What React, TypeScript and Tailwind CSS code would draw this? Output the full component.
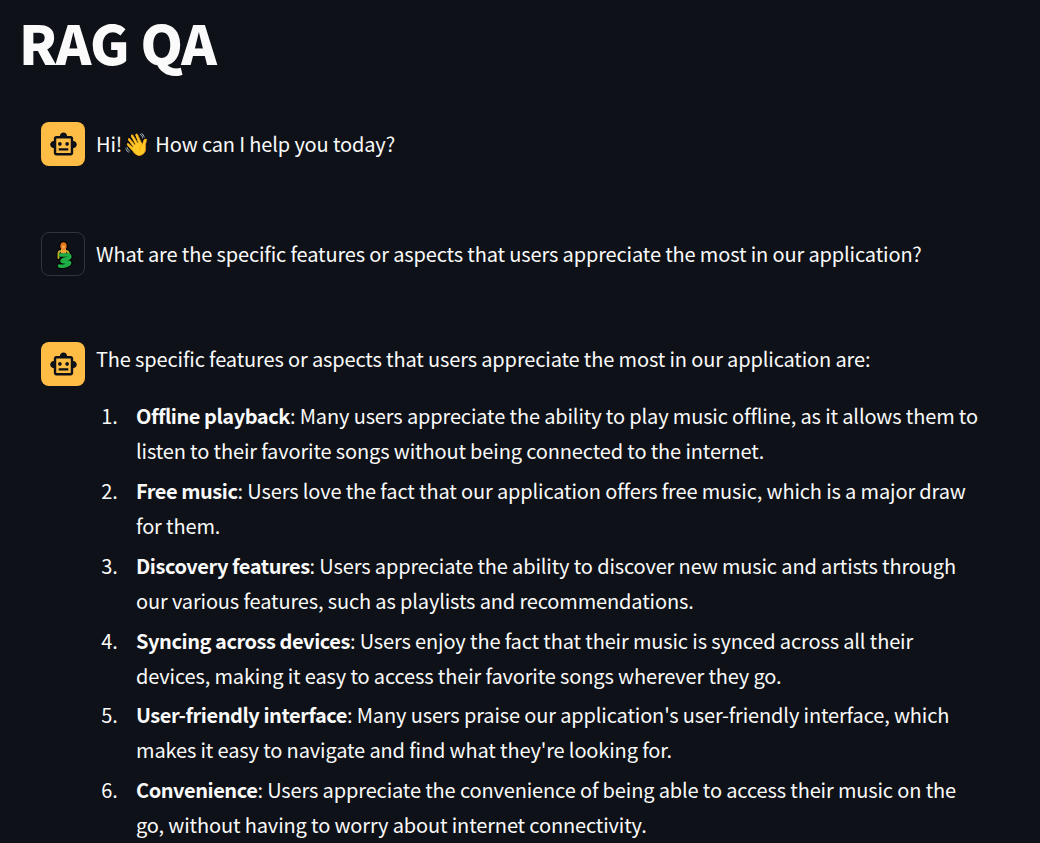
import React from "react";

const Bot = () => (
  <div className="flex h-[44px] w-[44px] shrink-0 items-center justify-center rounded-[8px] bg-[#ffbd45]">
    <svg width="29" height="29" viewBox="0 0 24 24" fill="#0e1117">
      <path d="M20 9V7c0-1.1-.9-2-2-2h-3c0-1.66-1.34-3-3-3S9 3.34 9 5H6c-1.1 0-2 .9-2 2v2c-1.66 0-3 1.34-3 3s1.34 3 3 3v4c0 1.1.9 2 2 2h12c1.1 0 2-.9 2-2v-4c1.66 0 3-1.34 3-3s-1.34-3-3-3zm-2 10H6V7h12v12zm-9-6c-.83 0-1.5-.67-1.5-1.5S8.17 10 9 10s1.5.67 1.5 1.5S9.83 13 9 13zm7.5-1.5c0 .83-.67 1.5-1.5 1.5s-1.5-.67-1.5-1.5.67-1.5 1.5-1.5 1.5.67 1.5 1.5zM8 15h8v2H8v-2z" />
    </svg>
  </div>
);

const Merperson = () => (
  <svg width="26" height="30" viewBox="0 0 26 30" fill="none" strokeLinecap="round" strokeLinejoin="round">
    <path d="M8.5 19V14.5c0-1.5 1-2.5 2.5-2.5h5c1.5 0 2.5 1 2.5 2.5V16" stroke="#000" strokeWidth="4" />
    <path d="M10 16h9c1.5 1.5 1 3-1 3.5-3 .5-6 .5-6 2.5s6.500 0 7.500 1.500-4 4.500-10 3.500" stroke="#000" strokeWidth="5.500" />
    <ellipse cx="13.500" cy="7" rx="4.500" ry="5" fill="#000" />
    <path d="M8.500 19V14.500c0-1.500 1-2.500 2.500-2.500h5c1.500 0 2.500 1 2.500 2.500V16" stroke="#b9ad2c" strokeWidth="2" />
    <rect x="11" y="9.500" width="5" height="5" fill="#f2a33a" />
    <ellipse cx="13.500" cy="7" rx="3.200" ry="3.800" fill="#e2741c" />
    <rect x="12" y="6.500" width="3" height="3" fill="#f4a64a" />
    <path d="M10.500 16h8.500c1.500 1.500 1 3-1 3.500-3 .5-6 .5-6 2.500s6.500 0 7.500 1.500-4 4.500-10 3.500" stroke="#1fae46" strokeWidth="3.500" />
  </svg>
);

const items: [string, string][] = [
  ["Offline playback", ": Many users appreciate the ability to play music offline, as it allows them to listen to their favorite songs without being connected to the internet."],
  ["Free music", ": Users love the fact that our application offers free music, which is a major draw for them."],
  ["Discovery features", ": Users appreciate the ability to discover new music and artists through our various features, such as playlists and recommendations."],
  ["Syncing across devices", ": Users enjoy the fact that their music is synced across all their devices, making it easy to access their favorite songs wherever they go."],
  ["User-friendly interface", ": Many users praise our application's user-friendly interface, which makes it easy to navigate and find what they're looking for."],
  ["Convenience", ": Users appreciate the convenience of being able to access their music on the go, without having to worry about internet connectivity."],
];

export default function App() {
  return (
    <div className="h-[843px] overflow-hidden bg-[#0e1117] pl-[21px] text-[20px] leading-[35px] tracking-[-0.14px] text-[#fafafa] [font-family:'Noto_Sans_CJK_SC','Noto_Sans',sans-serif]">
      <h1 className="-ml-[2px] pt-[9px] text-[54px] font-black leading-[66px] tracking-[-0.8px]">RAG QA</h1>
      <div className="mt-[47px] flex gap-[11px] pl-[20px]">
        <Bot />
        <p className="pt-[3px]">Hi!<span className="mx-[1px] text-[22px]">👋</span> How can I help you today?</p>
      </div>
      <div className="mt-[66px] flex gap-[11px] pl-[20px]">
        <div className="flex h-[44px] w-[44px] shrink-0 items-center justify-center rounded-[8px] border border-[#31333f]"><Merperson /></div>
        <p className="pt-[4px]">What are the specific features or aspects that users appreciate the most in our application?</p>
      </div>
      <div className="mt-[66px] flex gap-[11px] pl-[20px]">
        <Bot />
        <div className="-mt-[1px] w-[888px]">
          <p>The specific features or aspects that users appreciate the most in our application are:</p>
          <ol className="mt-[22px] list-decimal pl-[26px]">
            {items.map(([b, t]) => (
              <li key={b} className="mb-[4.85px] pl-[14px]"><b className="font-semibold tracking-[-0.45px]">{b}</b>{t}</li>
            ))}
          </ol>
        </div>
      </div>
    </div>
  );
}
